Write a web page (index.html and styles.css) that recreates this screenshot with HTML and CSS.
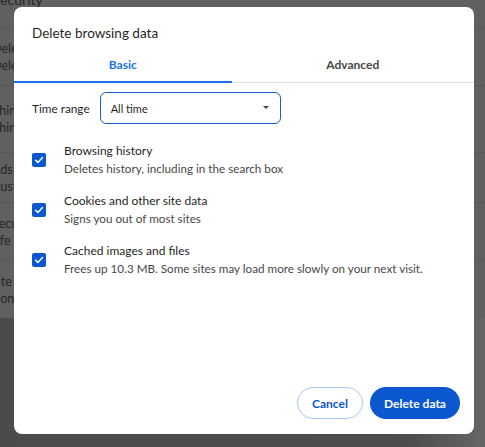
FILE: index.html
```html
<!DOCTYPE html>
<html>
<head>
<meta charset="utf-8">
<link rel="stylesheet" href="styles.css">
</head>
<body>
<div class="page">
  <div class="card">
    <div class="row row-head"><span class="bg-text">Privacy and security</span></div>
    <div class="row row-a"><span class="bg-text">Delete browsing data</span><span class="bg-text">Delete history, cookies, cache, and more</span></div>
    <div class="row row-b"><span class="bg-text">Third-party cookies</span><span class="bg-text">Third-party cookies are blocked in Incognito mode</span></div>
    <div class="row row-c"><span class="bg-text">Ads privacy</span><span class="bg-text">Customize the info used by sites to show you ads</span></div>
    <div class="row row-d"><span class="bg-text">Security</span><span class="bg-text shift">Safe Browsing (protection from dangerous sites)</span></div>
    <div class="row row-e"><span class="bg-text shift-s">Site settings</span><span class="bg-text">Controls what information sites can use and show</span></div>
  </div>
</div>

<div class="dialog">
  <div class="title">Delete browsing data</div>
  <div class="tabs">
    <div class="tab active">Basic</div>
    <div class="tab">Advanced</div>
  </div>
  <div class="body">
    <div class="range">
      <span class="range-label">Time range</span>
      <div class="select">
        <span>All time</span>
        <span class="arrow"></span>
      </div>
    </div>
    <div class="items">
      <div class="item">
        <span class="check"><svg viewBox="0 0 14 14" width="14" height="14"><path d="M3.6 7.2 L5.9 9.4 L10.5 4.6" fill="none" stroke="#fff" stroke-width="1.5" stroke-linecap="round" stroke-linejoin="round"/></svg></span>
        <div class="item-text">
          <div class="item-title">Browsing history</div>
          <div class="item-desc">Deletes history, including in the search box</div>
        </div>
      </div>
      <div class="item">
        <span class="check"><svg viewBox="0 0 14 14" width="14" height="14"><path d="M3.6 7.2 L5.9 9.4 L10.5 4.6" fill="none" stroke="#fff" stroke-width="1.5" stroke-linecap="round" stroke-linejoin="round"/></svg></span>
        <div class="item-text">
          <div class="item-title">Cookies and other site data</div>
          <div class="item-desc">Signs you out of most sites</div>
        </div>
      </div>
      <div class="item">
        <span class="check"><svg viewBox="0 0 14 14" width="14" height="14"><path d="M3.6 7.2 L5.9 9.4 L10.5 4.6" fill="none" stroke="#fff" stroke-width="1.5" stroke-linecap="round" stroke-linejoin="round"/></svg></span>
        <div class="item-text">
          <div class="item-title">Cached images and files</div>
          <div class="item-desc">Frees up 10.3 MB. Some sites may load more slowly on your next visit.</div>
        </div>
      </div>
    </div>
  </div>
  <div class="actions">
    <button class="btn btn-cancel">Cancel</button>
    <button class="btn btn-primary">Delete data</button>
  </div>
</div>
</body>
</html>
```

FILE: styles.css
```css
html, body {
  margin: 0;
  padding: 0;
}
body {
  width: 485px;
  height: 447px;
  overflow: hidden;
  position: relative;
  font-family: Lato, "Noto Sans", sans-serif;
}
.page {
  width: 485px;
  height: 447px;
  background: linear-gradient(to right, #4b4b4b 0%, #4d4d4d 85%, #666 100%);
}
.card {
  background: #606060;
  height: 318px;
  display: flex;
  flex-direction: column;
}
.row {
  display: flex;
  flex-direction: column;
  justify-content: center;
  border-bottom: 1px solid #575757;
  box-sizing: border-box;
}
.row-head { height: 28px; justify-content: flex-end; padding-bottom: 19px; }
.row-a { height: 58px; }
.row-b { height: 67px; }
.row-c { height: 50px; }
.row-d { height: 58px; }
.row-e { height: 57px; border-bottom: none; }
.bg-text {
  font-size: 12.5px;
  line-height: 17px;
  color: #262626;
  white-space: nowrap;
  margin-left: -8px;
}
.row-head .bg-text { margin-left: -80px; font-size: 14px; }
.bg-text.shift { margin-left: -13px; }
.bg-text.shift-s { margin-left: -9px; }

.dialog {
  position: absolute;
  left: 14px;
  top: 7px;
  width: 460px;
  height: 427px;
  background: #fff;
  border-radius: 8px;
  display: flex;
  flex-direction: column;
  box-sizing: border-box;
}
.title {
  font-size: 13.5px;
  line-height: 20px;
  color: #1f1f1f;
  padding: 16px 18px 0;
}
.tabs {
  display: flex;
  margin-top: 7px;
  border-bottom: 1px solid #dadce0;
}
.tab {
  flex: 1 1 auto;
  text-align: center;
  font-size: 12px;
  font-weight: 700;
  color: #474747;
  line-height: 16px;
  padding: 7px 0 8px;
  border-bottom: 2px solid transparent;
  margin-bottom: -1px;
}
.tab.active {
  color: #1a73e8;
  border-bottom-color: #1a73e8;
}
.body {
  flex: 1;
  padding: 0 18px;
}
.range {
  display: flex;
  align-items: center;
  gap: 10px;
  margin-top: 9px;
}
.range-label {
  font-size: 11.8px;
  color: #1f1f1f;
}
.select {
  width: 181px;
  height: 32px;
  box-sizing: border-box;
  border: 1.5px solid #1a5fd0;
  border-radius: 6px;
  display: flex;
  align-items: center;
  justify-content: space-between;
  padding: 0 11px 0 10px;
  font-size: 11px;
  color: #1f1f1f;
}
.arrow {
  width: 0;
  height: 0;
  border-left: 3.5px solid transparent;
  border-right: 3.5px solid transparent;
  border-top: 3.5px solid #444;
  margin-top: -2px;
}
.items {
  display: flex;
  flex-direction: column;
  gap: 15px;
  margin-top: 18px;
}
.item {
  display: flex;
  align-items: center;
  gap: 18px;
}
.check {
  width: 14px;
  height: 14px;
  border-radius: 2px;
  background: #0b57d0;
  display: flex;
  flex-shrink: 0;
}
.item-title {
  font-size: 12px;
  line-height: 18px;
  color: #1f1f1f;
}
.item-desc {
  font-size: 11.7px;
  line-height: 17px;
  color: #474747;
}
.actions {
  display: flex;
  justify-content: flex-end;
  gap: 7px;
  padding: 0 14px 15px;
}
.btn {
  height: 32px;
  border-radius: 16px;
  font-family: Lato, "Noto Sans", sans-serif;
  font-size: 12px;
  font-weight: 700;
  box-sizing: border-box;
  padding: 0;
  white-space: nowrap;
}
.btn-cancel {
  background: #fff;
  color: #0b57d0;
  border: 1px solid #a8c7fa;
  width: 66px;
}
.btn-primary {
  background: #0b57d0;
  color: #fff;
  border: none;
  width: 90px;
}
```
